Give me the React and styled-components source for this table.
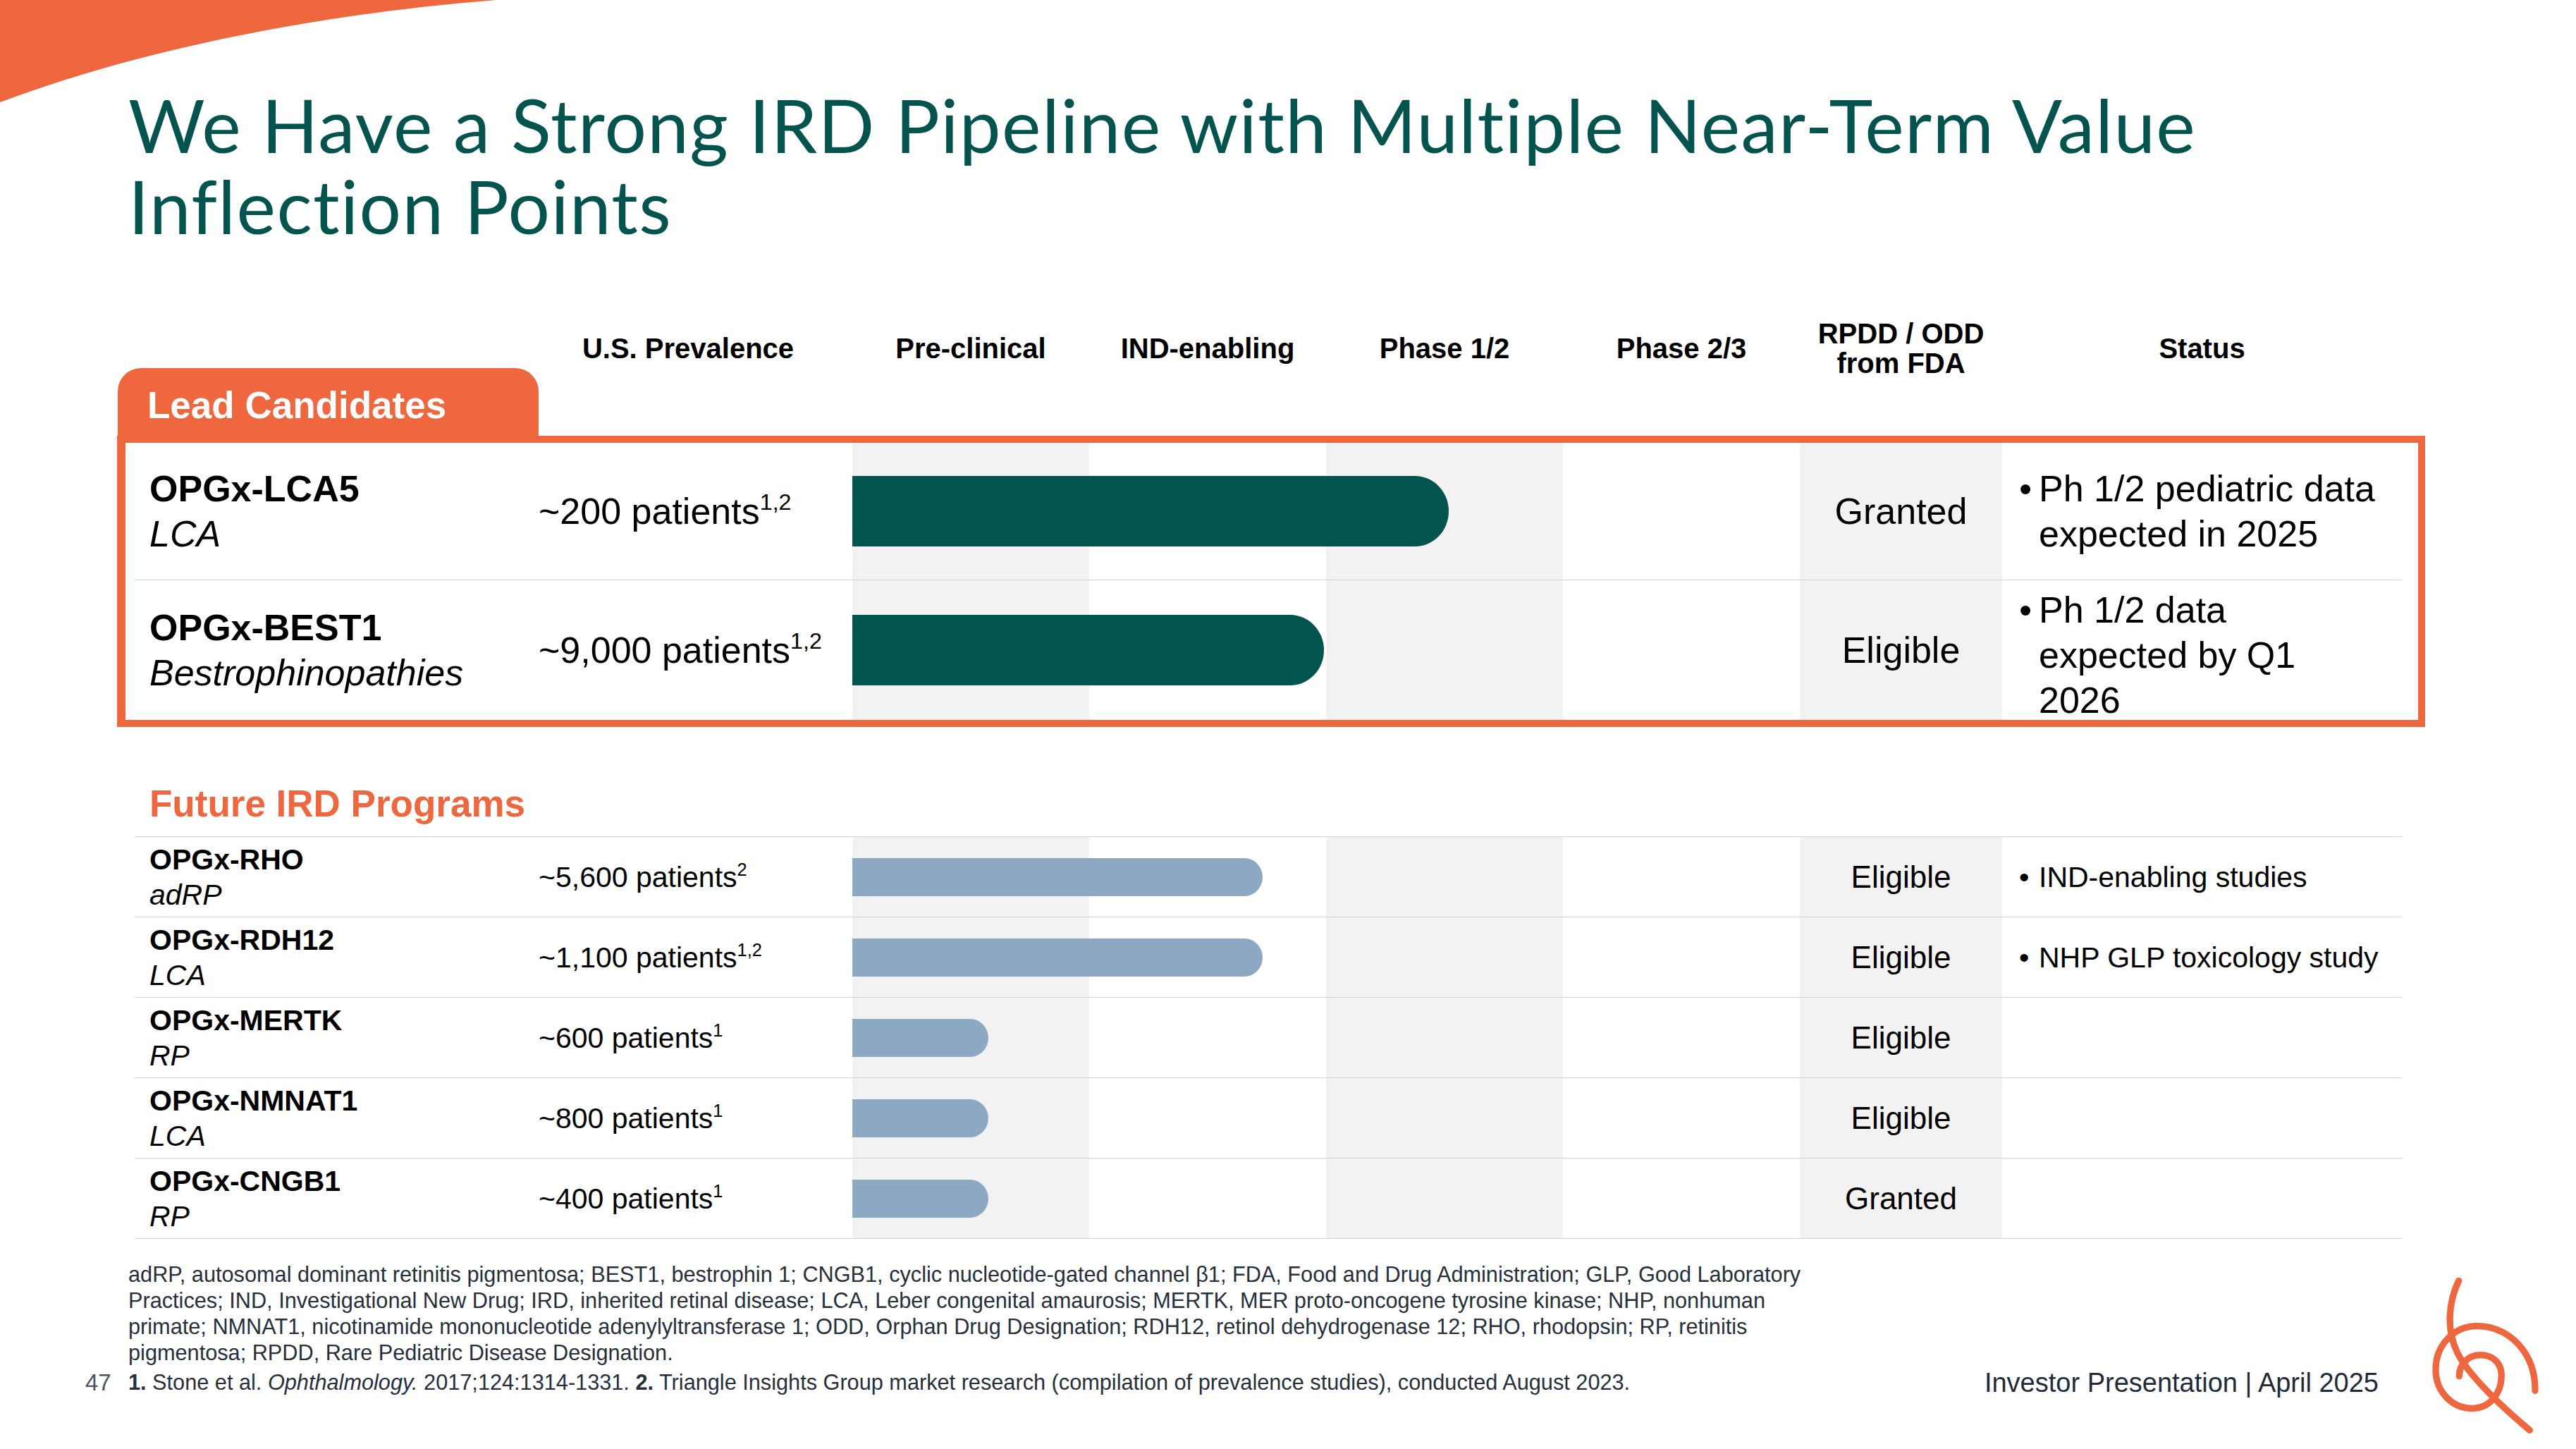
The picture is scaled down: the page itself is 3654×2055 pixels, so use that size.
import React from "react";
import styled, { createGlobalStyle } from "styled-components";

const ORANGE = "#EF673F";
const TEAL = "#03534F";
const STRIPE = "#F2F2F2";
const NAVY = "#1F2B3A";

// name | prevalence | 4 stages | RPDD | status
const COLS8 = "552px 466px 336px 336px 336px 336px 287px 567px";
const COLS5 = "552px 466px 1344px 287px 567px";

const GlobalStyle = createGlobalStyle`
  html, body { margin: 0; padding: 0; background: #fff; }
  body { font-family: "Liberation Sans", Arial, sans-serif; color: #000; }
`;

const Page = styled.div`
  position: relative;
  width: 3654px;
  height: 2055px;
  overflow: hidden;
  background: #fff;
`;

const Swoosh = styled.svg`
  position: absolute;
  left: 0;
  top: 0;
`;

const Title = styled.h1`
  margin: 0;
  padding: 119px 0 0 182px;
  font-family: Lato, "Liberation Sans", sans-serif;
  font-weight: 400;
  font-size: 105px;
  line-height: 115px;
  letter-spacing: 1.4px;
  font-variant-ligatures: none;
  color: ${TEAL};
`;

const Header = styled.div`
  display: grid;
  grid-template-columns: ${COLS8};
  height: 178px;
  margin: 91px 0 0 191px;
  align-items: start;
`;

const HeadCell = styled.div`
  height: 108px;
  display: flex;
  align-items: center;
  justify-content: center;
  text-align: center;
  font-weight: 700;
  font-size: 40px;
  line-height: 42px;
`;

const Tab = styled.div`
  align-self: end;
  grid-row: 1;
  grid-column: 1;
  margin-left: -24px;
  width: 597px;
  height: 96px;
  box-sizing: border-box;
  padding: 8px 0 0 42px;
  display: flex;
  align-items: center;
  background: ${ORANGE};
  border-radius: 33px 33px 0 0;
  color: #fff;
  font-weight: 700;
  font-size: 53px;
`;

const LeadBox = styled.div`
  margin-left: 166px;
  width: 3274px;
  box-sizing: border-box;
  border: solid ${ORANGE};
  border-width: 10px 10px 10px 12px;
  padding: 0 23px 0 13px;
`;

const Row = styled.div`
  display: grid;
  grid-template-columns: ${COLS5};
  grid-template-rows: ${(p) => p.$h}px;
  height: ${(p) => p.$h}px;
  font-size: ${(p) => p.$size}px;
  line-height: ${(p) => p.$lh}px;
  & + & {
    border-top: 1px solid ${(p) => p.$line};
  }
`;

const NameCell = styled.div`
  padding-left: 21px;
  display: flex;
  flex-direction: column;
  justify-content: center;
`;

const Name = styled.span`
  font-weight: 700;
`;

const Indication = styled.span`
  font-style: italic;
`;

const PrevCell = styled.div`
  padding-left: 21px;
  display: flex;
  align-items: center;
  white-space: nowrap;
`;

const Sup = styled.sup`
  font-size: 0.62em;
  line-height: 0;
  vertical-align: 0.62em;
`;

const StageTrack = styled.div`
  display: flex;
  align-items: center;
  background: linear-gradient(
    to right,
    ${STRIPE} 0 336px,
    #fff 336px 672px,
    ${STRIPE} 672px 1008px,
    #fff 1008px 1344px
  );
`;

const Bar = styled.div`
  height: ${(p) => p.$h}px;
  background: ${(p) => p.$color};
  border-radius: 0 ${(p) => p.$h * 0.48}px ${(p) => p.$h * 0.48}px 0 / 0
    ${(p) => p.$h / 2}px ${(p) => p.$h / 2}px 0;
`;

const RpddCell = styled.div`
  background: ${STRIPE};
  display: flex;
  align-items: center;
  justify-content: center;
  font-size: ${(p) => p.$size}px;
`;

const StatusCell = styled.div`
  min-height: 0;
  box-sizing: border-box;
  padding: ${(p) => p.$drop}px 0 0 24px;
  display: flex;
  align-items: center;
`;

const StatusItem = styled.div`
  display: flex;
  align-items: flex-start;
`;

const Bullet = styled.span`
  width: 28px;
  flex: none;
`;

const FutureTitle = styled.h2`
  margin: 77px 0 0 212px;
  font-size: 53px;
  line-height: 64px;
  font-weight: 700;
  color: ${ORANGE};
`;

const FutureTable = styled.div`
  margin: 14px 0 0 191px;
  width: 3216px;
  border-top: 1px solid #cdd4dc;
  border-bottom: 1px solid #cdd4dc;
`;

const Footer = styled.div`
  display: flex;
  justify-content: space-between;
  align-items: flex-start;
  height: 265px;
  margin-top: 32px;
`;

const Notes = styled.div`
  display: grid;
  grid-template-columns: 61px auto;
  padding-left: 121px;
  font-size: 30.7px;
  line-height: 37px;
  color: #262f3b;
`;

const NoteLines = styled.div`
  grid-column: 2;
  & > span {
    display: block;
    white-space: nowrap;
  }
`;

const PageNum = styled.div`
  grid-column: 1;
  margin-top: 5px;
  font-size: 33px;
  color: #4b5563;
`;

const RefLine = styled.div`
  grid-column: 2;
  margin-top: 5px;
  white-space: nowrap;
`;

const Brand = styled.div`
  display: flex;
  align-items: flex-start;
  gap: 46px;
`;

const Edition = styled.div`
  margin-top: 150px;
  font-size: 38px;
  line-height: 44px;
  color: ${NAVY};
  white-space: nowrap;
`;

const lead = [
  { name: "OPGx-LCA5", ind: "LCA", prev: "~200 patients", sup: "1,2", bar: 846, rpdd: "Granted", status: ["Ph 1/2 pediatric data", "expected in 2025"], h: 194 },
  { name: "OPGx-BEST1", ind: "Bestrophinopathies", prev: "~9,000 patients", sup: "1,2", bar: 669, rpdd: "Eligible", status: ["Ph 1/2 data", "expected by Q1", "2026"], h: 198 },
];

const future = [
  { name: "OPGx-RHO", ind: "adRP", prev: "~5,600 patients", sup: "2", bar: 582, rpdd: "Eligible", status: ["IND-enabling studies"] },
  { name: "OPGx-RDH12", ind: "LCA", prev: "~1,100 patients", sup: "1,2", bar: 582, rpdd: "Eligible", status: ["NHP GLP toxicology study"] },
  { name: "OPGx-MERTK", ind: "RP", prev: "~600 patients", sup: "1", bar: 193, rpdd: "Eligible" },
  { name: "OPGx-NMNAT1", ind: "LCA", prev: "~800 patients", sup: "1", bar: 193, rpdd: "Eligible" },
  { name: "OPGx-CNGB1", ind: "RP", prev: "~400 patients", sup: "1", bar: 193, rpdd: "Granted" },
];

const ProgramRow = ({ p, h, size, lh, rpddSize, barH, barColor, line }) => (
  <Row $h={h} $size={size} $lh={lh} $line={line}>
    <NameCell>
      <Name>{p.name}</Name>
      <Indication>{p.ind}</Indication>
    </NameCell>
    <PrevCell>
      <span>
        {p.prev}
        <Sup>{p.sup}</Sup>
      </span>
    </PrevCell>
    <StageTrack>
      <Bar $h={barH} $color={barColor} style={{ width: p.bar }} />
    </StageTrack>
    <RpddCell $size={rpddSize}>{p.rpdd}</RpddCell>
    <StatusCell $drop={p.status && p.status.length > 2 ? 14 : 0}>
      {p.status && (
        <StatusItem>
          <Bullet>•</Bullet>
          <span>
            {p.status.map((s, i) => (
              <React.Fragment key={i}>
                {i > 0 && <br />}
                {s}
              </React.Fragment>
            ))}
          </span>
        </StatusItem>
      )}
    </StatusCell>
  </Row>
);

const Logo = () => (
  <svg width="234" height="265" viewBox="0 30 702 795">
    <g fill="none" stroke={ORANGE} strokeWidth="28" strokeLinecap="round">
      <path d="M203 112 C160 200 148 320 198 420 C248 520 400 660 505 748" />
      <path d="M528 580 C530 420 420 310 290 305 C180 300 105 390 105 490 C105 590 180 655 260 655 C340 655 385 585 385 515 C385 460 345 428 295 428 C245 428 205 465 205 518" />
    </g>
  </svg>
);

export default function App() {
  return (
    <Page>
      <GlobalStyle />
      <Swoosh width="704" height="145" viewBox="0 0 704 145">
        <path d="M0 0 H704 C450 20 200 70 0 145 Z" fill={ORANGE} />
      </Swoosh>

      <Title>
        We Have a Strong IRD Pipeline with Multiple Near-Term Value
        <br />
        Inflection Points
      </Title>

      <Header>
        <Tab>Lead Candidates</Tab>
        <HeadCell style={{ gridColumn: 2 }}>U.S. Prevalence</HeadCell>
        <HeadCell>Pre-clinical</HeadCell>
        <HeadCell>IND-enabling</HeadCell>
        <HeadCell>Phase 1/2</HeadCell>
        <HeadCell>Phase 2/3</HeadCell>
        <HeadCell>
          RPDD / ODD
          <br />
          from FDA
        </HeadCell>
        <HeadCell>Status</HeadCell>
      </Header>

      <LeadBox>
        {lead.map((p) => (
          <ProgramRow
            key={p.name}
            p={p}
            h={p.h}
            size={52}
            lh={64}
            rpddSize={52}
            barH={100}
            barColor="#02544F"
            line="#d0d0d0"
          />
        ))}
      </LeadBox>

      <FutureTitle>Future IRD Programs</FutureTitle>
      <FutureTable>
        {future.map((p) => (
          <ProgramRow
            key={p.name}
            p={p}
            h={113}
            size={41}
            lh={50}
            rpddSize={44}
            barH={54}
            barColor="#8DA8C3"
            line="#cdd4dc"
          />
        ))}
      </FutureTable>

      <Footer>
        <Notes>
          <NoteLines>
            <span>
              adRP, autosomal dominant retinitis pigmentosa; BEST1, bestrophin 1; CNGB1, cyclic nucleotide-gated channel β1; FDA, Food and Drug Administration; GLP, Good Laboratory
            </span>
            <span>
              Practices; IND, Investigational New Drug; IRD, inherited retinal disease; LCA, Leber congenital amaurosis; MERTK, MER proto-oncogene tyrosine kinase; NHP, nonhuman
            </span>
            <span>
              primate; NMNAT1, nicotinamide mononucleotide adenylyltransferase 1; ODD, Orphan Drug Designation; RDH12, retinol dehydrogenase 12; RHO, rhodopsin; RP, retinitis
            </span>
            <span>pigmentosa; RPDD, Rare Pediatric Disease Designation.</span>
          </NoteLines>
          <PageNum>47</PageNum>
          <RefLine>
            <b>1.</b> Stone et al. <i>Ophthalmology.</i> 2017;124:1314-1331. <b>2.</b> Triangle Insights Group market research (compilation of prevalence studies), conducted August 2023.
          </RefLine>
        </Notes>
        <Brand>
          <Edition>Investor Presentation | April 2025</Edition>
          <Logo />
        </Brand>
      </Footer>
    </Page>
  );
}
